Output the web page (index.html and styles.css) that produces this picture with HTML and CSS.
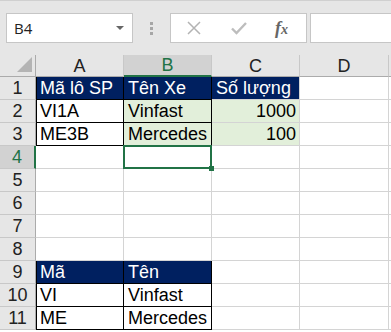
FILE: index.html
```html
<!DOCTYPE html>
<html lang="en">
<head>
    <meta charset="UTF-8">
    <title>Sheet1</title>
    <link rel="stylesheet" href="styles.css">
</head>
<body>

    <div class="toolbar">
        <div class="namebox">
            <span>B4</span>
            <span class="caret"></span>
        </div>
        <div class="grip"><i></i><i></i><i></i></div>
        <div class="fbuttons">
            <svg width="14" height="14" viewBox="0 0 14 14"><path d="M1 1 L13 13 M13 1 L1 13" stroke="#b3b3b3" stroke-width="1.5" fill="none"/></svg>
            <svg width="16" height="14" viewBox="0 0 16 14"><path d="M1 7.5 L5.5 12 L15 2" stroke="#bdbdbd" stroke-width="2.4" fill="none"/></svg>
            <span class="fx">f<small>x</small></span>
        </div>
        <div class="finput"></div>
    </div>

    <div class="sheet">
        <!-- header row -->
        <div class="corner"><span></span></div>
        <div class="colh">A</div>
        <div class="colh active">B</div>
        <div class="colh">C</div>
        <div class="colh">D</div>
        <div class="colh"></div>

        <div class="rowh">1</div>
        <div class="cell navy blk bl">Mã lô SP</div>
        <div class="cell navy blk">Tên Xe</div>
        <div class="cell navy">Số lượng</div>
        <div class="cell"></div>
        <div class="cell"></div>

        <div class="rowh">2</div>
        <div class="cell blk bl">VI1A</div>
        <div class="cell green blk">Vinfast</div>
        <div class="cell green num">1000</div>
        <div class="cell"></div>
        <div class="cell"></div>

        <div class="rowh">3</div>
        <div class="cell blk bl">ME3B</div>
        <div class="cell green blk">Mercedes</div>
        <div class="cell green num">100</div>
        <div class="cell"></div>
        <div class="cell"></div>

        <div class="rowh active">4</div>
        <div class="cell"></div>
        <div class="cell sel"></div>
        <div class="cell"></div>
        <div class="cell"></div>
        <div class="cell"></div>

        <div class="rowh">5</div>
        <div class="cell"></div><div class="cell"></div><div class="cell"></div><div class="cell"></div><div class="cell"></div>
        <div class="rowh">6</div>
        <div class="cell"></div><div class="cell"></div><div class="cell"></div><div class="cell"></div><div class="cell"></div>
        <div class="rowh">7</div>
        <div class="cell"></div><div class="cell"></div><div class="cell"></div><div class="cell"></div><div class="cell"></div>
        <div class="rowh">8</div>
        <div class="cell"></div><div class="cell"></div><div class="cell"></div><div class="cell"></div><div class="cell"></div>

        <div class="rowh">9</div>
        <div class="cell navy blk bl">Mã</div>
        <div class="cell navy blk">Tên</div>
        <div class="cell"></div>
        <div class="cell"></div>
        <div class="cell"></div>

        <div class="rowh">10</div>
        <div class="cell blk bl">VI</div>
        <div class="cell blk">Vinfast</div>
        <div class="cell"></div>
        <div class="cell"></div>
        <div class="cell"></div>

        <div class="rowh">11</div>
        <div class="cell blk bl">ME</div>
        <div class="cell blk">Mercedes</div>
        <div class="cell"></div>
        <div class="cell"></div>
        <div class="cell"></div>
    </div>

</body>
</html>
```

FILE: styles.css
```css
    body {
        margin: 0;
        width: 391px;
        height: 332px;
        overflow: hidden;
        background: #fff;
        font-family: "Liberation Sans", Arial, sans-serif;
    }

    /* formula bar */
    .toolbar {
        height: 55px;
        box-sizing: border-box;
        background: #e6e6e6;
        border-top: 1px solid #d0d0d0;
        padding: 12px 0 0 6px;
        display: flex;
        align-items: flex-start;
    }

    .namebox {
        width: 127px;
        height: 30px;
        box-sizing: border-box;
        background: #fff;
        border: 1px solid #c6c6c6;
        display: flex;
        align-items: center;
        justify-content: space-between;
        padding: 0 8px 0 7px;
        font-family: "Open Sans", "Liberation Sans", sans-serif;
        font-size: 15px;
        color: #222;
    }

    .caret {
        width: 0;
        height: 0;
        border-left: 4px solid transparent;
        border-right: 4px solid transparent;
        border-top: 4px solid #666;
    }

    .grip {
        width: 37px;
        height: 30px;
        display: flex;
        flex-direction: column;
        align-items: center;
        justify-content: center;
        gap: 2px;
    }

    .grip i {
        width: 3px;
        height: 3px;
        background: #a6a6a6;
    }

    .fbuttons {
        width: 137px;
        height: 30px;
        box-sizing: border-box;
        background: #fff;
        border: 1px solid #c6c6c6;
        display: flex;
        align-items: center;
        padding-left: 16px;
        gap: 30px;
    }

    .fx {
        font-family: "Liberation Serif", serif;
        font-style: italic;
        font-weight: bold;
        font-size: 18px;
        color: #666;
        margin-left: -2px;
    }

    .fx small {
        font-size: 14px;
    }

    .finput {
        flex: 1;
        height: 30px;
        box-sizing: border-box;
        margin-left: 3px;
        background: #fff;
        border: 1px solid #c6c6c6;
        border-right: none;
    }

    /* grid */
    .sheet {
        display: grid;
        grid-template-columns: 36px 88px 88px 88px 89px 1fr;
        grid-template-rows: 22px repeat(11, 23px) 2px;
    }

    .cell {
        box-sizing: border-box;
        border-right: 1px solid #d4d4d4;
        border-bottom: 1px solid #d4d4d4;
        display: flex;
        align-items: center;
        padding: 0 4px 0 4px;
        font-size: 18px;
        color: #000;
        white-space: nowrap;
    }

    .corner,
    .colh,
    .rowh {
        box-sizing: border-box;
        background: #e6e6e6;
        display: flex;
        align-items: center;
        justify-content: center;
        font-size: 18px;
        color: #222;
    }

    .corner {
        position: relative;
        border-right: 1px solid #ababab;
        border-bottom: 1px solid #ababab;
    }

    .corner span {
        position: absolute;
        right: 3px;
        bottom: 4px;
        width: 15px;
        height: 15px;
        background: #b4b4b4;
        clip-path: polygon(100% 0, 100% 100%, 0 100%);
    }

    .colh {
        border-right: 1px solid #c8c8c8;
        border-bottom: 1px solid #ababab;
        padding-top: 1px;
    }

    .rowh {
        border-right: 1px solid #ababab;
        border-bottom: 1px solid #c8c8c8;
    }

    .colh.active {
        background: #d2d2d2;
        color: #217346;
        border-bottom: 2px solid #217346;
    }

    .rowh.active {
        background: #d2d2d2;
        color: #217346;
        border-right: 2px solid #217346;
    }

    .navy {
        background: #002060;
        color: #fff;
    }

    .green {
        background: #e2efda;
    }

    .blk {
        border-right-color: #000;
        border-bottom-color: #000;
    }

    .bl {
        box-shadow: inset 1px 0 0 #000;
    }

    .num {
        justify-content: flex-end;
        padding-right: 3px;
    }

    /* active cell */
    .sel {
        position: relative;
        z-index: 2;
    }

    .sel::before {
        content: "";
        position: absolute;
        top: -1px;
        left: -1px;
        right: -1px;
        bottom: -1px;
        border: 2px solid #217346;
    }

    .sel::after {
        content: "";
        position: absolute;
        right: -3px;
        bottom: -3px;
        width: 5px;
        height: 5px;
        background: #217346;
    }
```
